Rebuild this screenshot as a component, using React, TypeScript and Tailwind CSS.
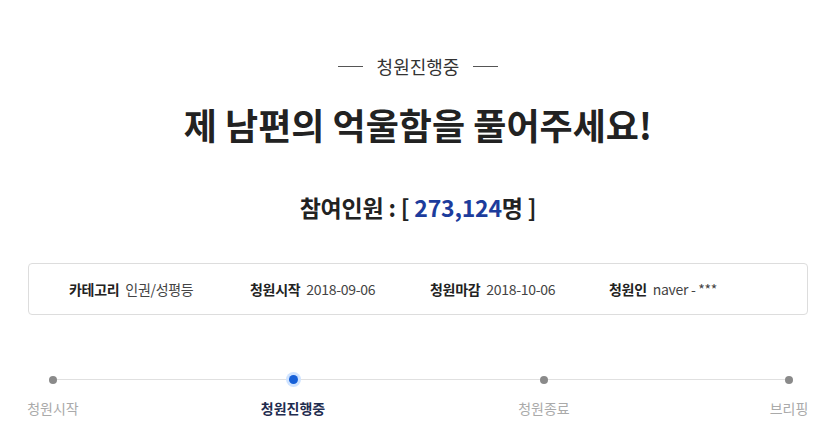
import React from 'react';

const steps = [
  { label: '청원시작', active: false, pos: 'ml-[13px]' },
  { label: '청원진행중', active: true, pos: 'ml-[160px]' },
  { label: '청원종료', active: false, pos: 'ml-[171px]' },
  { label: '브리핑', active: false, pos: 'ml-[165px]' },
];

const info = [
  { k: '카테고리', v: '인권/성평등', w: 'w-[181px]' },
  { k: '청원시작', v: '2018-09-06', w: 'w-[180px]' },
  { k: '청원마감', v: '2018-10-06', w: 'w-[179px]' },
  { k: '청원인', v: 'naver - ***', w: '' },
];

const App: React.FC = () => {
  return (
    <div className="w-[820px] h-[438px] bg-white overflow-hidden font-['Noto_Sans_CJK_KR','Noto_Sans',sans-serif]">
      <div className="ml-[28px] mr-[12px]">
        {/* status */}
        <div className="pt-[53px] flex items-center justify-center gap-[14px]">
          <span className="block w-[25px] h-px bg-[#555]" />
          <span className="text-[18px] leading-[26px] text-[#333]">청원진행중</span>
          <span className="block w-[25px] h-px bg-[#555]" />
        </div>

        {/* title */}
        <h1 className="mt-[20px] text-center text-[36px] leading-[50px] font-bold text-[#222]">
          제 남편의 억울함을 풀어주세요!
        </h1>

        {/* count */}
        <div className="mt-[42px] text-center text-[23px] leading-[32px] font-bold text-[#222] tracking-[-0.2px]">
          참여인원 : [ <span className="text-[#1c3c9c]">273,124</span>명 ]
        </div>

        {/* info box */}
        <div className="mt-[40px] h-[52px] border border-[#ddd] rounded-[4px] flex items-center pl-[40px] text-[14px] tracking-[-0.3px]">
          {info.map((it) => (
            <div key={it.k} className={`flex items-center gap-[6px] ${it.w}`}>
              <span className="font-bold text-[#222]">{it.k}</span>
              <span className="text-[#444]">{it.v}</span>
            </div>
          ))}
        </div>
      </div>

      {/* progress */}
      <div className="relative mt-[53px]">
        <div className="absolute left-[52px] right-[31px] top-[11px] h-px bg-[#e0e0e0]" />
        <div className="relative flex">
          {steps.map((s) => (
            <div key={s.label} className={`w-[80px] shrink-0 flex flex-col items-center ${s.pos}`}>
              <div className="h-[23px] flex items-center justify-center">
                {s.active ? (
                  <span className="w-[15px] h-[15px] rounded-full bg-[#cfe3ff] flex items-center justify-center">
                    <span className="w-[9px] h-[9px] rounded-full bg-[#1660d8]" />
                  </span>
                ) : (
                  <span className="w-[8px] h-[8px] rounded-full bg-[#8a8a8a]" />
                )}
              </div>
              <span
                className={
                  s.active
                    ? 'mt-[7px] text-[14px] leading-[20px] font-bold text-[#1f2d4f] whitespace-nowrap'
                    : 'mt-[7px] text-[14px] leading-[20px] text-[#aaa] whitespace-nowrap'
                }
              >
                {s.label}
              </span>
            </div>
          ))}
        </div>
      </div>
    </div>
  );
};

export default App;
